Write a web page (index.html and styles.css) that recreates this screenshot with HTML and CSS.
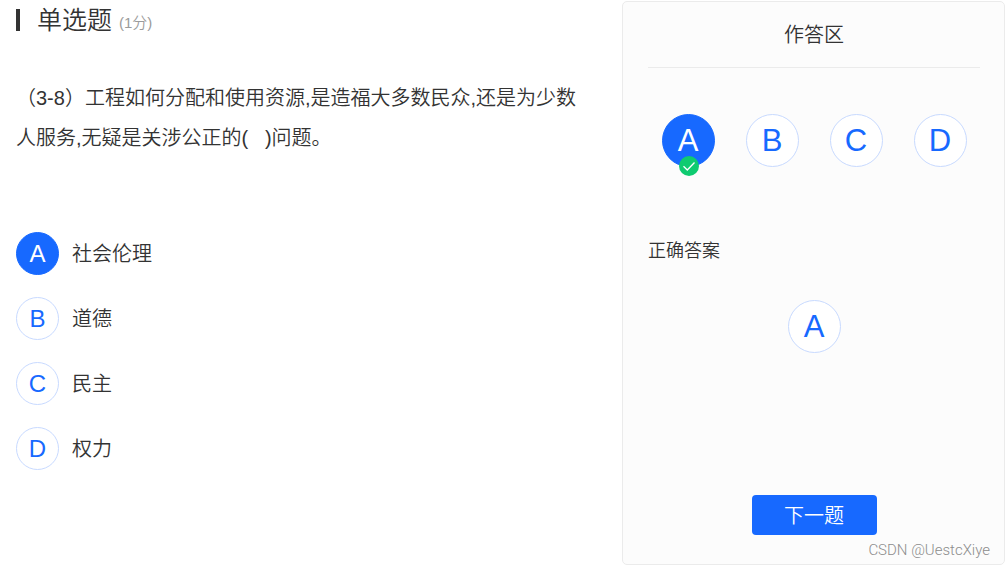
FILE: index.html
```html
<!DOCTYPE html>
<html lang="zh-CN">
<head>
<meta charset="utf-8">
<meta name="viewport" content="width=device-width, initial-scale=1">
<title>单选题</title>
<link rel="stylesheet" href="styles.css">
</head>
<body>
<div class="page">
  <main class="question">
    <header class="question-head">
      <h1 class="question-type">单选题</h1>
      <span class="question-score">(1分)</span>
    </header>
    <p class="question-text">（3-8）工程如何分配和使用资源,是造福大多数民众,还是为少数人服务,无疑是关涉公正的(&nbsp;&nbsp; )问题。</p>
    <div class="options" role="radiogroup" aria-label="选项">
      <label class="option"><input class="option-input" type="radio" name="option" checked><span class="option-mark">A</span><span class="option-text">社会伦理</span></label>
      <label class="option"><input class="option-input" type="radio" name="option"><span class="option-mark">B</span><span class="option-text">道德</span></label>
      <label class="option"><input class="option-input" type="radio" name="option"><span class="option-mark">C</span><span class="option-text">民主</span></label>
      <label class="option"><input class="option-input" type="radio" name="option"><span class="option-mark">D</span><span class="option-text">权力</span></label>
    </div>
  </main>
  <aside class="panel">
    <h2 class="panel-title">作答区</h2>
    <div class="choices">
      <button class="choice choice-selected" type="button" aria-pressed="true">A
        <svg class="choice-check" viewBox="0 0 20 20" aria-hidden="true"><circle cx="10" cy="10" r="10" fill="#0fcb70"/><path d="M4.5 10.3 8.3 14 15.5 6.5" fill="none" stroke="#fff" stroke-width="1.3"/></svg>
      </button>
      <button class="choice" type="button">B</button>
      <button class="choice" type="button">C</button>
      <button class="choice" type="button">D</button>
    </div>
    <h3 class="answer-title">正确答案</h3>
    <div class="choice answer">A</div>
    <button class="next" type="button">下一题</button>
    <span class="watermark">CSDN @UestcXiye</span>
  </aside>
</div>
</body>
</html>
```
FILE: styles.css
```css
* {
  box-sizing: border-box;
}

body {
  margin: 0;
  background: #fff;
  color: #333;
  font-family: "Liberation Sans", "Noto Sans CJK SC", sans-serif;
  font-size: 20px;
  font-weight: 350;
}

button {
  font: inherit;
  padding: 0;
  cursor: pointer;
}

h1,
h2,
h3,
p {
  margin: 0;
  font-weight: 350;
}

.page {
  display: grid;
  grid-template-columns: 1fr 383px;
  min-height: 100vh;
  padding: 1px 0 2px;
}

.question {
  padding: 0 40px 0 16px;
}

.question-head {
  display: flex;
  align-items: center;
  height: 37px;
}

.question-head::before {
  content: "";
  width: 4px;
  height: 22px;
  margin-right: 17px;
  background: #333;
}

.question-type {
  font-size: 25px;
  line-height: 36px;
}

.question-score {
  margin-left: 7px;
  padding-top: 6px;
  color: #9b9b9b;
  font-size: 15px;
  line-height: 24px;
}

.question-text {
  margin-top: 40px;
  line-height: 40px;
}

.options {
  display: grid;
  gap: 22px;
  margin-top: 74px;
}

.option {
  position: relative;
  display: flex;
  align-items: center;
  gap: 13px;
  cursor: pointer;
}

.option-input {
  position: absolute;
  width: 43px;
  height: 43px;
  margin: 0;
  opacity: 0;
}

.option-text {
  padding-bottom: 2px;
}

.option-mark,
.choice {
  display: flex;
  align-items: center;
  justify-content: center;
  border: 1px solid #c8daff;
  border-radius: 50%;
  background: #fff;
  color: #1769ff;
}

.option-mark {
  width: 43px;
  height: 43px;
  font-size: 24px;
}

.option-input:checked + .option-mark,
.choice-selected {
  border-color: #1769ff;
  background: #1769ff;
  color: #fff;
}

.panel {
  position: relative;
  display: flex;
  flex-direction: column;
  padding: 0 24px 29px 25px;
  border: 1px solid #ebebeb;
  border-radius: 5px;
  background: #fcfcfc;
}

.panel-title {
  height: 66px;
  border-bottom: 1px solid #ebebeb;
  font-size: 20px;
  line-height: 66px;
  text-align: center;
}

.choices {
  display: flex;
  justify-content: center;
  gap: 31px;
  margin-top: 46px;
}

.choice {
  position: relative;
  width: 53px;
  height: 53px;
  font-size: 31px;
}

.choice-check {
  position: absolute;
  bottom: -10px;
  left: 16px;
  width: 20px;
  height: 20px;
}

.answer-title {
  margin-top: 70px;
  font-size: 18px;
  line-height: 28px;
}

.answer {
  align-self: center;
  margin-top: 35px;
}

.next {
  align-self: center;
  width: 125px;
  height: 40px;
  margin-top: auto;
  padding-bottom: 2px;
  border: 0;
  border-radius: 4px;
  background: #1769ff;
  color: #fff;
}

.watermark {
  position: absolute;
  right: 14px;
  bottom: 4px;
  color: #8c8c8c;
  font-family: Roboto, sans-serif;
  font-size: 15px;
  font-weight: 300;
  line-height: 20px;
}
```
